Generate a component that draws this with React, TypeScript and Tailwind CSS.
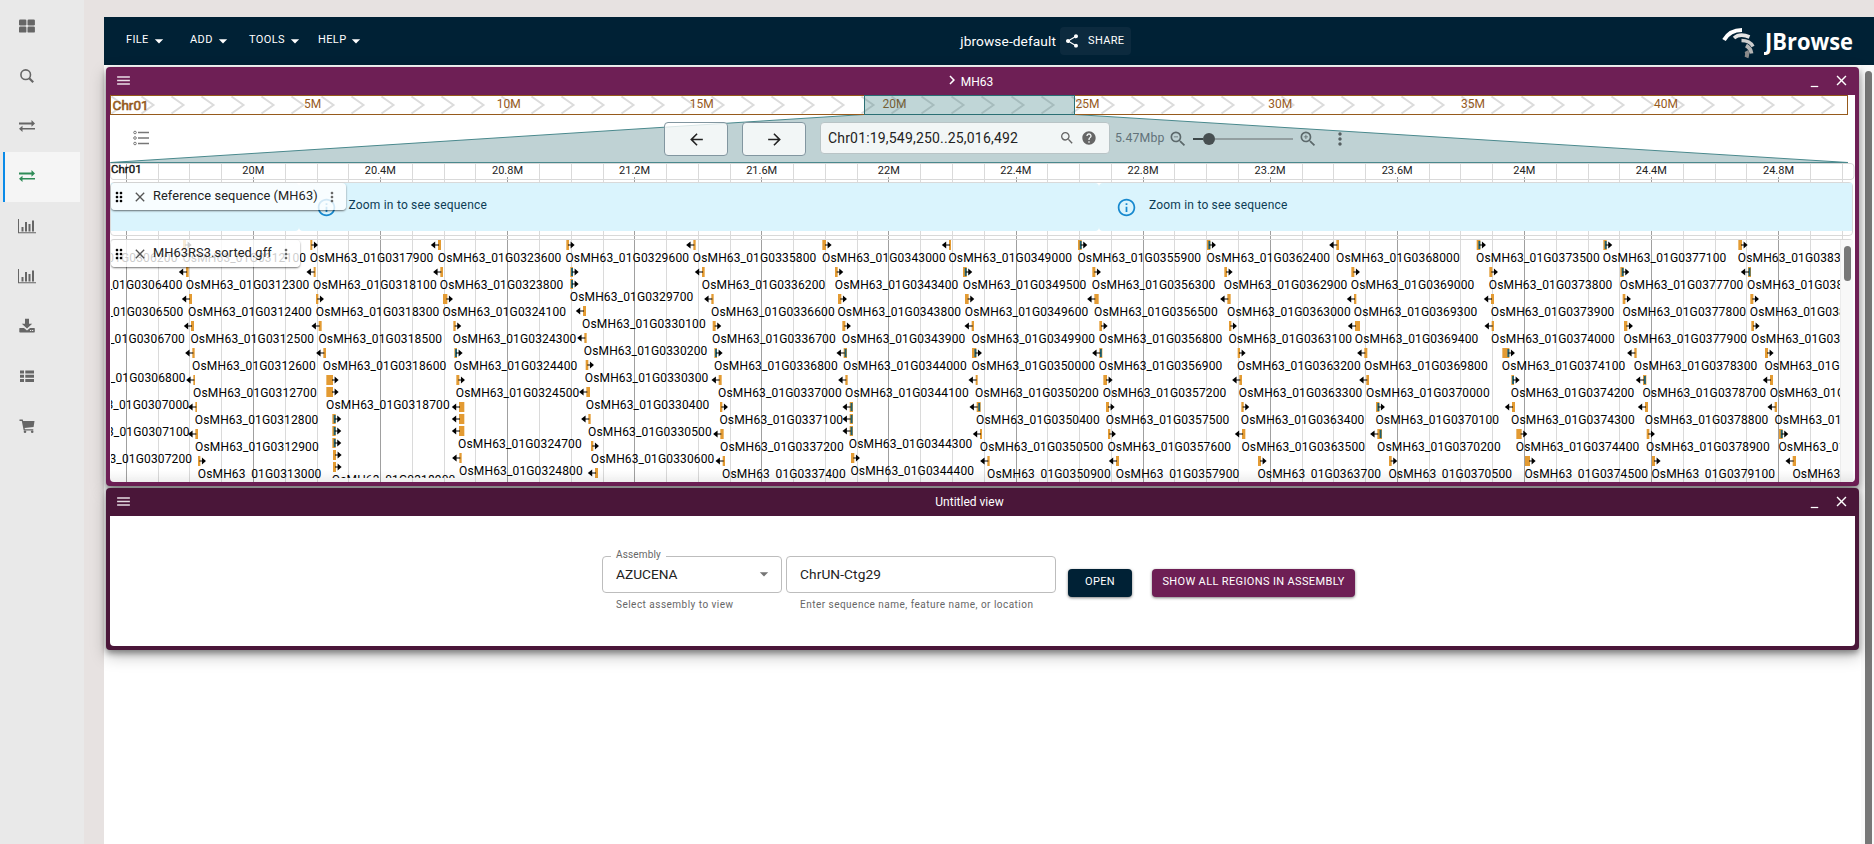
import type { ReactNode } from "react";
import {
  MdArrowBack,
  MdArrowDropDown,
  MdArrowForward,
  MdChevronRight,
  MdClose,
  MdDragIndicator,
  MdHelp,
  MdMenu,
  MdMinimize,
  MdMoreVert,
  MdOutlineInfo,
  MdSearch,
  MdShare,
  MdZoomIn,
  MdZoomOut,
} from "react-icons/md";

/* ---------- gene track data ---------- */

// [name suffix, row, label x, glyph x, glyph width, strand, kind, glyph tops, label baseline]
// x values are thirds of a pixel from the tile's left edge.
type Gene = [string, number, number, number, number, "L" | "R", ("t" | "o")?, number[]?, number?];
type Tile = { x: number; genes: Gene[] };

const tiles: Tile[] = [
  {
    x: 100,
    genes: [
      ["312100", 0, 250, 249, 9, "R"],
      ["312300", 1, 260, 258, 8, "L"],
      ["312400", 2, 267, 267, 9, "L"],
      ["312500", 3, 274, 273, 9, "L"],
      ["312600", 4, 279, 277, 7, "L"],
      ["312700", 5, 282, 280, 5, "L"],
      ["312800", 6, 287, 286, 5, "L"],
      ["312900", 7, 288, 286, 8, "L"],
      ["313000", 8, 296, 294, 7, "R"],
      ["317900", 0, 632, 631, 6, "R"],
      ["318100", 1, 642, 641, 6, "L"],
      ["318300", 2, 650, 648, 7, "R"],
      ["318500", 3, 658, 656, 9, "L"],
      ["318600", 4, 671, 670, 8, "L"],
      ["318700", 5, 681, 679, 20, "R", "o", [375, 387], 408.7],
      ["318900", 6, 698, 697, 10, "R", "t", [414, 426, 438], 484],
      ["", 6, 698, 699, 9, "R", "o", [450, 462], 484],
      ["323600", 0, 1016, 1014, 9, "L"],
      ["323800", 1, 1022, 1021, 8, "L"],
      ["324100", 2, 1030, 1029, 13, "R"],
      ["324300", 3, 1061, 1060, 7, "R"],
      ["324400", 4, 1064, 1063, 8, "R", "t"],
      ["324500", 5, 1070, 1069, 9, "R"],
      ["324700", 6, 1077, 1077, 16, "L", "o", [402, 414, 426], 447.7],
      ["324800", 7, 1080, 1078, 7, "L", "o", [453], 474.7],
    ],
  },
  {
    x: 540,
    genes: [
      ["329600", 0, 79, 79, 8, "R"],
      ["329700", 1, 92, 91, 8, "R", "t", [267, 279], 300.7],
      ["330100", 2, 129, 129, 9, "L", "o", [306], 327.7],
      ["330200", 3, 134, 133, 7, "L", "o", [333], 354.7],
      ["330300", 4, 137, 137, 8, "R", "o", [360], 381.7],
      ["330400", 5, 140, 139, 11, "L", "o", [387], 408.7],
      ["330500", 6, 147, 145, 7, "L", "o", [414], 435.7],
      ["330600", 7, 155, 153, 7, "R", "o", [441], 462.7],
      ["", 8, 165, 165, 9, "L", "o", [468], 489.7],
      ["335800", 0, 461, 460, 7, "L"],
      ["336200", 1, 488, 486, 8, "L"],
      ["336600", 2, 516, 514, 7, "L"],
      ["336700", 3, 519, 518, 9, "R"],
      ["336800", 4, 525, 523, 8, "R", "t"],
      ["337000", 5, 537, 536, 9, "L"],
      ["337100", 6, 541, 540, 7, "R"],
      ["337200", 7, 543, 541, 10, "L"],
      ["337400", 8, 549, 548, 7, "L"],
      ["343000", 0, 849, 847, 11, "R"],
      ["343400", 1, 887, 885, 8, "R"],
      ["343800", 2, 895, 894, 10, "R"],
      ["343900", 3, 908, 907, 9, "R"],
      ["344000", 4, 912, 911, 10, "L", "t"],
      ["344100", 5, 918, 916, 7, "L"],
      ["344300", 6, 929, 929, 10, "L", "t", [402, 414, 426], 447.7],
      ["344400", 7, 934, 933, 10, "R", "o", [453], 474.7],
      ["349000", 0, 1228, 1227, 6, "L"],
      ["349500", 1, 1271, 1269, 11, "R", "t"],
      ["349600", 2, 1277, 1275, 11, "R"],
      ["349900", 3, 1297, 1295, 7, "L"],
      ["350000", 4, 1297, 1296, 13, "R", "t"],
      ["350200", 5, 1308, 1307, 6, "L"],
      ["350400", 6, 1311, 1310, 12, "L", "t"],
      ["350500", 7, 1322, 1320, 6, "L"],
      ["350900", 8, 1344, 1342, 7, "L"],
    ],
  },
  {
    x: 980,
    genes: [
      ["355900", 0, 295, 294, 11, "R", "t"],
      ["356300", 1, 338, 337, 9, "R"],
      ["356500", 2, 345, 343, 13, "L"],
      ["356800", 3, 359, 358, 8, "R"],
      ["356900", 4, 359, 358, 9, "L", "t"],
      ["357200", 5, 371, 370, 11, "R"],
      ["357500", 6, 380, 378, 9, "R"],
      ["357600", 7, 385, 384, 7, "R"],
      ["357900", 8, 410, 408, 9, "L"],
      ["362400", 0, 682, 681, 10, "R", "t"],
      ["362900", 1, 734, 733, 8, "R"],
      ["363000", 2, 744, 742, 10, "L"],
      ["363100", 3, 748, 747, 7, "R"],
      ["363200", 4, 774, 773, 7, "R"],
      ["363300", 5, 779, 778, 8, "L"],
      ["363400", 6, 785, 784, 7, "R"],
      ["363500", 7, 787, 786, 10, "L"],
      ["363700", 8, 835, 834, 9, "R"],
      ["368000", 0, 1071, 1069, 8, "L"],
      ["369000", 1, 1115, 1114, 9, "R"],
      ["369300", 2, 1124, 1122, 7, "L"],
      ["369400", 3, 1127, 1125, 15, "L"],
      ["369800", 4, 1155, 1153, 9, "L"],
      ["370000", 5, 1161, 1159, 8, "L"],
      ["370100", 6, 1189, 1188, 10, "R", "t"],
      ["370200", 7, 1194, 1192, 14, "L", "t"],
      ["370500", 8, 1228, 1227, 8, "R"],
    ],
  },
  {
    x: 1420,
    genes: [
      ["373500", 0, 171, 170, 11, "R", "t"],
      ["373800", 1, 209, 208, 9, "R"],
      ["373900", 2, 215, 213, 9, "L"],
      ["374000", 3, 216, 215, 7, "L"],
      ["374100", 4, 248, 247, 21, "R", "t"],
      ["374200", 5, 275, 274, 8, "R", "t"],
      ["374300", 6, 276, 276, 9, "L"],
      ["374400", 7, 290, 289, 16, "R"],
      ["374500", 8, 316, 315, 15, "R"],
      ["377100", 0, 551, 550, 10, "R", "t"],
      ["377700", 1, 602, 601, 10, "R", "t"],
      ["377800", 2, 610, 608, 8, "R"],
      ["377900", 3, 613, 612, 10, "R"],
      ["378300", 4, 644, 643, 7, "L"],
      ["378700", 5, 670, 669, 10, "L", "t"],
      ["378800", 6, 677, 675, 9, "L"],
      ["378900", 7, 681, 680, 8, "R"],
      ["379100", 8, 697, 696, 9, "R"],
      ["383200", 0, 956, 955, 11, "R"],
      ["383600", 1, 984, 984, 9, "L", "t"],
      ["383700", 2, 992, 991, 9, "R"],
      ["383900", 3, 996, 994, 8, "R"],
      ["384100", 4, 1036, 1035, 9, "R"],
      ["384300", 5, 1052, 1050, 9, "L"],
      ["384400", 6, 1066, 1064, 7, "L"],
      ["384600", 7, 1078, 1077, 11, "R", "t"],
      ["384900", 8, 1120, 1118, 10, "L"],
    ],
  },
];

// Labels of genes that begin before the visible region: [suffix, x, baseline]
const leading: [string, number, number][] = [
  ["306200", 54.6, 261.7],
  ["306400", 59.6, 288.7],
  ["306500", 60.4, 315.7],
  ["306700", 62, 342.7],
  ["306800", 62.8, 381.7],
  ["307000", 66.3, 408.7],
  ["307100", 66.8, 435.7],
  ["307200", 69.3, 462.7],
];

const labelClass = "fill-black font-[Roboto] text-[12px]";
const LABEL_WIDTH = 123.6;

function Label({ name, x, y }: { name: string; x: number; y: number }) {
  return (
    <text x={x} y={y} textLength={LABEL_WIDTH} className={labelClass}>
      {"OsMH63_01G0" + name}
    </text>
  );
}

function Glyph({ x, y, w, dir, teal }: { x: number; y: number; w: number; dir: "L" | "R"; teal: boolean }) {
  const m = y + 5;
  return (
    <g>
      <rect x={x} y={y} width={w} height={10} fill="#e39b33" />
      {teal && <rect x={x + w - (dir === "R" ? 1.9 : 2.4)} y={y + 1} width={1.9} height={8} fill="#1d6173" />}
      {dir === "R" ? (
        <>
          <path d={`M${x + w - 1} ${m}h4`} stroke="#000" />
          <path d={`M${x + w + 5.6} ${m}l-4 -3.6v7.2z`} />
        </>
      ) : (
        <>
          <path d={`M${x + 1} ${m}h-5`} stroke="#000" />
          <path d={`M${x - 7.2} ${m}l4.4 -3.6v7.2z`} />
        </>
      )}
    </g>
  );
}

function GeneTrack() {
  return (
    <svg width="1728.5" height="238" viewBox="111 240 1728.5 238" className="ml-px block shrink-0 overflow-hidden">
      {leading.map(([name, x, y]) => (
        <Label key={name} name={name} x={x - 0.8} y={y - 0.2} />
      ))}
      {tiles.map((tile) =>
        tile.genes.map(([name, row, lx, gx, w, dir, kind, tops, base]) => (
          <g key={`${tile.x}-${lx}-${gx}-${row}`}>
            {(tops ?? [240 + row * 27]).map((top) => (
              <Glyph key={top} x={tile.x + gx / 3} y={top} w={w / 3} dir={dir} teal={kind === "t"} />
            ))}
            {name && <Label name={name} x={tile.x + lx / 3 - 0.9} y={(base ?? 261.7 + row * 27) - 0.2} />}
          </g>
        )),
      )}
    </svg>
  );
}

/* ---------- rulers ---------- */

const PX_PER_TICK = 31.775;
const ticks = Array.from({ length: 55 }, (_, i) => ({
  x: Math.floor(126.4 + i * PX_PER_TICK) + 0.5,
  major: i % 4 === 0,
}));
const scaleLabels = ["20M", "20.4M", "20.8M", "21.2M", "21.6M", "22M", "22.4M", "22.8M", "23.2M", "23.6M", "24M", "24.4M", "24.8M"];

const overviewLabels: [string, number][] = [
  ["5M", 312.7],
  ["10M", 508.8],
  ["15M", 701.8],
  ["20M", 894.6],
  ["25M", 1087.4],
  ["30M", 1280.2],
  ["35M", 1473],
  ["40M", 1666],
];

function Gridlines() {
  return (
    <svg width="1745" height="319" viewBox="110 163 1745 319" className="absolute left-0 top-0">
      {ticks.map((t) => (
        <path key={t.x} d={`M${t.x} 163V482`} stroke={t.major ? "#a0a0a0" : "#dadada"} />
      ))}
    </svg>
  );
}

function Overview() {
  return (
    <svg width="1745" height="20" viewBox="110 95 1745 20" className="block">
      {Array.from({ length: 58 }, (_, i) => (
        <path
          key={i}
          d={`M${111.5 + 30 * i} 96.5l12 8.5l-12 8.5`}
          fill="none"
          stroke="#dcdcdc"
          strokeWidth="2"
        />
      ))}
      <rect x="110.5" y="95.5" width="1737" height="19" fill="none" stroke="#965a1c" />
      <text x="112.6" y="110" stroke="#965a1c" strokeWidth=".6" className="fill-[#965a1c] font-[Roboto] text-[13.5px]">
        Chr01
      </text>
      {overviewLabels.map(([l, x]) => (
        <text key={l} x={x} y="108" textAnchor="middle" className="fill-[#965a1c] font-[Roboto] text-[12px]">
          {l}
        </text>
      ))}
      <rect x="864.5" y="95.5" width="210" height="19" fill="#1d6b6f" fillOpacity=".28" stroke="#2b6f74" />
    </svg>
  );
}

function ScaleBar() {
  return (
    <svg width="1745" height="19" viewBox="110 163 1745 19" className="relative block">
      <path d="M110 163.5H1851a3.5 3.5 0 0 1 3 3.5V176a3.5 3.5 0 0 1 -3 3.5H113a3 3 0 0 1 -2.5 -3V163.5" fill="none" stroke="#d9d9d9" />
      <text x="111" y="173" stroke="#111" strokeWidth=".4" className="fill-[#111] font-[Roboto] text-[11.5px]">
        Chr01
      </text>
      {scaleLabels.map((l, i) => {
        const x = 253.3 + i * 127.1;
        return (
          <g key={l}>
            <rect x={x - 17} y="164" width="34" height="13" fill="#fff" />
            <text x={x} y="174" textAnchor="middle" className="fill-[#222] font-[Roboto] text-[11px]">
              {l}
            </text>
          </g>
        );
      })}
    </svg>
  );
}

/* ---------- shared pieces ---------- */

function ViewFrame({ title, tone, children }: { title: ReactNode; tone: string; children: ReactNode }) {
  return (
    <section className={`relative w-[1753px] rounded px-1 pb-1 shadow-[0_3px_6px_rgba(0,0,0,.4),0_6px_16px_rgba(0,0,0,.25)] ${tone}`}>
      <header className="flex h-7 items-center text-white">
        <MdMenu className="-mt-px ml-[5px] size-[17px] text-white/85" />
        <div className="flex flex-1 items-center justify-center text-[12px] leading-none">{title}</div>
        <MdMinimize className="mr-[11px] size-[15px]" />
        <MdClose className="-mt-px mr-[5px] size-[17px]" />
      </header>
      {children}
    </section>
  );
}

function TrackChip({ name, width }: { name: string; width: string }) {
  return (
    <div className={`absolute left-px top-0 z-10 flex h-[27px] items-center rounded bg-white/80 shadow-[0_1px_2px_rgba(0,0,0,.55)] ${width}`}>
      <MdDragIndicator className="size-4 shrink-0 text-black" />
      <MdClose className="ml-[5px] size-4 shrink-0 text-[#555]" />
      <span className="mb-px ml-[5px] whitespace-nowrap text-[12.8px] tracking-[.1px] text-[#222]">{name}</span>
      <MdMoreVert className="ml-auto mr-[6px] size-4 shrink-0 text-[#666]" />
    </div>
  );
}

function ZoomNotice() {
  return (
    <>
      <MdOutlineInfo className="size-[21px] shrink-0 text-[#1789cf]" />
      <span className="mb-1 ml-[12px] whitespace-nowrap text-[12px] tracking-[.2px] text-[#0d3c55]">Zoom in to see sequence</span>
    </>
  );
}

/* ---------- left rail ---------- */

const swap = (
  <path d="M0 4.5h12.5V2L16 5.4 12.5 8.800V6.500H0zM16 11.500H3.500V14L0 10.800 3.500 7.800v2.200H16z" />
);
const chart = (
  <path d="M-1 1h1v13.200H17v1H-1zM2.500 9h2v4.500h-2zM6 4h2v9.500H6zM9.500 6h2v7.500h-2zM13 2.500h2v11h-2z" />
);

const railIcons: { key: string; icon: ReactNode; active?: boolean }[] = [
  {
    key: "grid",
    icon: (
      <>
        <rect x="0" y="1.500" width="7.400" height="6" rx="1.200" />
        <rect x="8.500" y="1.500" width="7.400" height="6" rx="1.200" />
        <rect x="0" y="8.600" width="7.400" height="6" rx="1.200" />
        <rect x="8.500" y="8.600" width="7.400" height="6" rx="1.200" />
      </>
    ),
  },
  {
    key: "search",
    icon: (
      <g fill="none" stroke="currentColor">
        <circle cx="6.700" cy="6.700" r="4.800" strokeWidth="1.600" />
        <path d="M10.200 10.200l4 4" strokeWidth="2.200" />
      </g>
    ),
  },
  { key: "swap", icon: swap },
  { key: "swap-active", icon: swap, active: true },
  { key: "chart-1", icon: chart },
  { key: "chart-2", icon: chart },
  {
    key: "download",
    icon: (
      <>
        <path d="M6 .8h4v5h3.200L8 10.500 2.800 5.800H6z" />
        <path d="M.8 10h4.200L8 12.500 11 10h4.200q.6 0 .6.600v3.200q0 .7-.7.700H1q-.7 0-.7-.700v-3.200q0-.6.500-.600z" />
        <path d="M11 12h1.200v1H11zM13 12h1.200v1H13z" fill="#e9e9e9" />
      </>
    ),
  },
  {
    key: "list",
    icon: <path d="M1 2.500h4v3H1zM6.300 2.500H15v3H6.300zM1 6.700h4v3H1zM6.300 6.700H15v3H6.300zM1 10.900h4v3H1zM6.300 10.900H15v3H6.300z" />,
  },
  {
    key: "cart",
    icon: (
      <>
        <path d="M.5 1.500h3.200l.5 1.600H15.500L14.600 9 5.600 10l.3 1.300h8.400v1.300H4.700L2.800 3H.5z" />
        <circle cx="6" cy="13.800" r="1.300" />
        <circle cx="13.200" cy="13.800" r="1.300" />
      </>
    ),
  },
];

function Rail() {
  return (
    <nav className="flex w-[84px] shrink-0 flex-col bg-[#e9e9e9] pl-[3px] pt-[2px]">
      {railIcons.map(({ key, icon, active }) => (
        <div
          key={key}
          className={
            active
              ? "flex h-[50px] w-[77px] items-center border-l-2 border-[#0b8be8] bg-[#f5f5f5] pb-[2px] pl-[14px] text-[#2e8b57]"
              : "flex h-[50px] w-[77px] items-center pb-[2px] pl-4 text-[#666]"
          }
        >
          <svg width="16" height="16" viewBox="0 0 16 16" fill="currentColor" className="overflow-visible">
            {icon}
          </svg>
        </div>
      ))}
    </nav>
  );
}

/* ---------- top bar ---------- */

function MenuItem({ label, className }: { label: string; className: string }) {
  return (
    <div className={`flex items-center text-[11px] tracking-[.37px] ${className}`}>
      {label}
      <MdArrowDropDown className="size-5" />
    </div>
  );
}

function TopBar() {
  return (
    <div className="flex h-12 shrink-0 items-center bg-[#002135] text-white">
      <div className="flex flex-1 pb-px pl-[22px]">
        <MenuItem label="FILE" className="w-[64px]" />
        <MenuItem label="ADD" className="w-[59px]" />
        <MenuItem label="TOOLS" className="w-[69px]" />
        <MenuItem label="HELP" className="w-[60px]" />
      </div>
      <div className="flex items-center">
        <span className="mr-[4px] text-[13.7px] tracking-[.1px]">jbrowse-default</span>
        <div className="flex h-7 w-[71px] items-center rounded bg-[#0c2a3e] pl-1 text-[11px] tracking-[.35px]">
          <MdShare className="mr-[8px] size-4" />
          SHARE
        </div>
      </div>
      <div className="flex w-[743px] items-center justify-end pr-[20px]">
        <svg width="36" height="34" viewBox="0 0 36 34" fill="none" className="mr-[6px] mt-[3px]">
          <path d="M2 14C6 7 12 4 20 4" stroke="#fff" strokeWidth="4" />
          <path d="M12 12C16 8.500 22 8.500 27.500 11" stroke="#e4e4e4" strokeWidth="3.600" />
          <path d="M19.500 14.500C25 14.500 29 16.500 31 20.500" stroke="#cdcdcd" strokeWidth="3.400" />
          <path d="M24 19.500C27.500 21.500 29 24 29.500 27.500" stroke="#b4b4b4" strokeWidth="3.800" />
          <path d="M24.500 25C25.500 27 25.500 29 24.500 31.500" stroke="#8a8a8a" strokeWidth="4" />
        </svg>
        <svg width="90" height="34" viewBox="0 0 90 34">
          <text x="1" y="26" textLength="88" lengthAdjust="spacingAndGlyphs" className="fill-white font-['Open_Sans'] text-[23.5px] font-bold">
            JBrowse
          </text>
        </svg>
      </div>
    </div>
  );
}

/* ---------- linear genome view ---------- */

function Controls() {
  return (
    <div className="relative flex h-12 items-center">
      <svg width="1745" height="48" viewBox="110 115 1745 48" className="absolute left-0 top-0">
        <path d="M864 114.500L1075 114.500L1848 162.500H110.500z" fill="#bfd2d4" stroke="#4a898d" />
      </svg>
      <svg width="16" height="16" viewBox="0 0 16 16" fill="none" stroke="#777" className="relative mb-[3px] ml-[23px]">
        <path d="M5 2.500h11M5 8h11M5 13.500h11" strokeWidth="1.300" />
        <circle cx="2" cy="2.500" r="1.300" />
        <circle cx="2" cy="8" r="1.300" />
        <circle cx="2" cy="13.500" r="1.300" />
      </svg>
      <div className="relative ml-[515px] flex h-[34px] w-16 items-center justify-center rounded border border-[#8296a0] bg-white/80">
        <MdArrowBack className="size-[19px] text-[#222]" />
      </div>
      <div className="relative ml-[14px] flex h-[34px] w-16 items-center justify-center rounded border border-[#8296a0] bg-white/80">
        <MdArrowForward className="size-[19px] text-[#222]" />
      </div>
      <div className="relative mb-[2px] ml-[14px] flex h-8 w-[290px] items-center rounded border border-[#b9c4c6] bg-white/80 pl-[7px]">
        <span className="flex-1 text-[14px] tracking-[.18px] text-[#222]">Chr01:19,549,250..25,016,492</span>
        <MdSearch className="size-4 text-[#666]" />
        <MdHelp className="ml-[6px] mr-[12px] size-4 text-[#666]" />
      </div>
      <span className="relative mb-[2px] ml-[5px] w-[49px] whitespace-nowrap text-[12.3px] tracking-[.15px] text-[#62727a]">5.47Mbp</span>
      <MdZoomOut className="relative mb-px ml-[4px] size-5 text-[#5c696b]" />
      <div className="relative ml-[5px] flex h-3 w-[100px] items-center">
        <div className="h-0.5 w-[10px] bg-[#3d4749]" />
        <div className="size-3 rounded-full bg-[#474f51]" />
        <div className="h-0.5 flex-1 bg-[#939fa1]" />
      </div>
      <MdZoomIn className="relative mb-px ml-[5px] size-5 text-[#5c696b]" />
      <MdMoreVert className="relative mb-px ml-[12px] size-5 text-[#555f61]" />
    </div>
  );
}

function GenomeView() {
  return (
    <ViewFrame
      tone="bg-[#6e1f55]"
      title={
        <>
          <MdChevronRight className="mb-0.5 size-[18px]" />
          <span className="mr-[3px] mt-px">MH63</span>
        </>
      }
    >
      <div className="h-[387px] overflow-hidden rounded-b bg-white">
        <Overview />
        <Controls />
        <div className="relative h-[319px]">
          <Gridlines />
          <ScaleBar />
          <div className="relative mr-[2px] h-[54px] rounded border border-[#d9d9d9]">
            <TrackChip name="Reference sequence (MH63)" width="-ml-px w-[235px]" />
            <div className="flex h-12">
              <div className="w-[187.5px] rounded-r bg-[#daf4fd]" />
              <div className="flex w-[800.500px] items-center rounded bg-[#daf4fd] pl-[17px]">
                <ZoomNotice />
              </div>
              <div className="flex flex-1 items-center rounded-l bg-[#daf4fd] pl-[17px]">
                <ZoomNotice />
              </div>
            </div>
          </div>
          <div className="relative mr-[2px] mt-[3px] h-[244px] rounded border-t border-[#d9d9d9]">
            <TrackChip name="MH63RS3.sorted.gff" width="w-[189px]" />
            <div className="flex">
              <GeneTrack />
              <div className="h-[242px] flex-1 border-l border-[#ececec] bg-[#f8f8f8]">
                <div className="ml-[3px] mt-[6px] h-[35px] w-[7px] rounded-full bg-[#777]" />
              </div>
            </div>
          </div>
          <div className="absolute inset-x-0 bottom-0 h-3 bg-linear-to-b from-transparent to-black/6" />
        </div>
      </div>
    </ViewFrame>
  );
}

/* ---------- import form view ---------- */

function ImportView() {
  return (
    <ViewFrame tone="bg-[#4a1639]" title="Untitled view">
      <div className="flex h-[130px] items-start rounded-b bg-white pl-[492px] pt-[40px] text-[#222]">
        <div className="w-[180px]">
          <div className="relative flex h-[37px] items-center rounded border border-[#bdbdbd] pb-px pl-[13px] pr-[7px] text-[13.700px]">
            <span className="absolute -top-[9px] left-[8px] bg-white px-[5px] text-[10px] leading-[14px] tracking-[.15px] text-[#666]">Assembly</span>
            <span className="flex-1">AZUCENA</span>
            <MdArrowDropDown className="size-5 text-[#757575]" />
          </div>
          <p className="pl-[14px] pt-[5px] text-[10px] leading-[14px] tracking-[.48px] text-[#666]">Select assembly to view</p>
        </div>
        <div className="ml-1 w-[270px]">
          <div className="flex h-[37px] items-center rounded border border-[#bdbdbd] pb-px pl-[13px] text-[13.700px] tracking-[.1px]">ChrUN-Ctg29</div>
          <p className="pl-[14px] pt-[5px] text-[10px] leading-[14px] tracking-[.48px] text-[#666]">Enter sequence name, feature name, or location</p>
        </div>
        <button className="ml-3 mt-[13px] h-7 w-16 rounded bg-[#002135] pb-px text-[11px] tracking-[.36px] text-white shadow-[0_1px_3px_rgba(0,0,0,.5)]">OPEN</button>
        <button className="ml-5 mt-[13px] h-7 w-[203px] whitespace-nowrap rounded bg-[#6e1f55] pb-px text-[11px] tracking-[.36px] text-white shadow-[0_1px_3px_rgba(0,0,0,.5)]">
          SHOW ALL REGIONS IN ASSEMBLY
        </button>
      </div>
    </ViewFrame>
  );
}

export default function App() {
  return (
    <div className="flex h-[844px] w-[1874px] overflow-hidden bg-[#e7e2e1] font-[Roboto,sans-serif]">
      <Rail />
      <main className="ml-5 flex flex-1 flex-col pt-[17px]">
        <TopBar />
        <div className="flex flex-1 bg-white">
          <div className="flex w-[1757px] flex-col gap-0.5 pl-0.5 pt-0.5">
            <GenomeView />
            <ImportView />
          </div>
          <div className="w-[13px] bg-[#fafafa] pl-1 pt-[6px]">
            <div className="h-[790px] w-[7px] rounded-t-full bg-[#777]" />
          </div>
        </div>
      </main>
    </div>
  );
}
